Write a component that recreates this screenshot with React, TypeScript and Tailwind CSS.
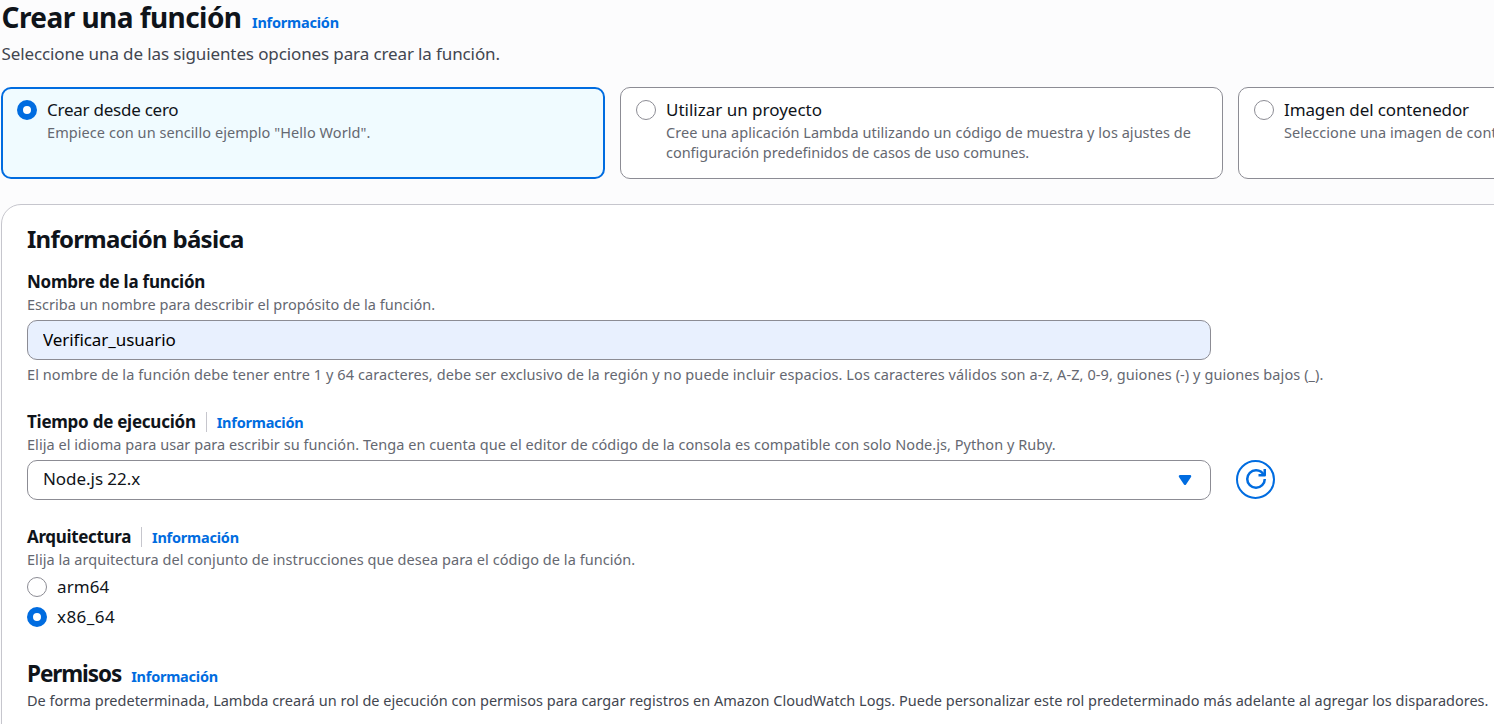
import type { ReactNode } from "react";
import { clsx } from "clsx";

function InfoLink() {
  return (
    <a href="#" className="text-[14.5px] leading-5 font-bold tracking-[-0.23px] text-[#006ce0]">
      Información
    </a>
  );
}

function Radio({ checked = false }: { checked?: boolean }) {
  return (
    <span
      className={clsx(
        "block size-5 shrink-0 rounded-full bg-white",
        checked ? "border-[6px] border-[#006ce0]" : "border-[1.5px] border-[#8c8c94]",
      )}
    />
  );
}

function Hint({ children, className }: { children: ReactNode; className?: string }) {
  return (
    <p className={clsx("text-[14.5px] leading-5 whitespace-nowrap text-[#656871]", className)}>{children}</p>
  );
}

function Tile({
  title,
  titleClass,
  checked = false,
  className,
  children,
}: {
  title: string;
  titleClass: string;
  checked?: boolean;
  className: string;
  children: ReactNode;
}) {
  return (
    <div
      className={clsx(
        "flex h-[92px] shrink-0 gap-2.5 rounded-[10px]",
        checked
          ? "border-2 border-[#006ce0] bg-[#f0fbff] pt-[8px] pl-[14px]"
          : "border border-[#8c8c94] bg-white pt-[9px] pl-[15px]",
        className,
      )}
    >
      <div className="pt-[3px]">
        <Radio checked={checked} />
      </div>
      <div>
        <div className={clsx("h-[25px] text-[17px] leading-[25px] whitespace-nowrap", titleClass)}>{title}</div>
        {children}
      </div>
    </div>
  );
}

function Label({ children, className, info = false }: { children: ReactNode; className: string; info?: boolean }) {
  return (
    <div className="flex h-[25px] items-center whitespace-nowrap">
      <span className={clsx("text-[17px] leading-[25px] font-bold", className)}>{children}</span>
      {info && (
        <span className="ml-2.5 flex h-5 items-center border-l border-[#c6c6cd] pt-px pl-2.5">
          <InfoLink />
        </span>
      )}
    </div>
  );
}

function RefreshIcon() {
  return (
    <svg viewBox="0 0 16 16" className="size-5" fill="none" stroke="currentColor" strokeWidth="2">
      <path d="M10 5h5V0" strokeLinejoin="round" />
      <path d="M15 8a6.957 6.957 0 0 1-7 7 6.957 6.957 0 0 1-7-7 6.957 6.957 0 0 1 7-7 6.87 6.87 0 0 1 6.3 4" />
    </svg>
  );
}

export default function App() {
  return (
    <main className="h-[724px] w-full overflow-hidden bg-[#fcfcfd] font-['Noto_Sans',sans-serif] text-[#0f141a]">
      <header className="pl-[1.5px]">
        <div className="flex h-[41px] items-baseline gap-[10.5px] whitespace-nowrap">
          <h1 className="text-[28px] leading-[35px] font-bold tracking-[-0.554px]">Crear una función</h1>
          <InfoLink />
        </div>
        <p className="text-[17px] leading-[25px] tracking-[-0.118px] whitespace-nowrap text-[#424650]">
          Seleccione una de las siguientes opciones para crear la función.
        </p>
      </header>

      <div className="mt-[21px] flex gap-[15px] pl-px">
        <Tile title="Crear desde cero" titleClass="tracking-[-0.25px]" checked className="w-[604px]">
          <Hint className="tracking-[0.065px]">Empiece con un sencillo ejemplo "Hello World".</Hint>
        </Tile>
        <Tile title="Utilizar un proyecto" titleClass="tracking-[0px]" className="w-[603px]">
          <Hint className="tracking-[0.03px]">
            Cree una aplicación Lambda utilizando un código de muestra y los ajustes de
          </Hint>
          <Hint className="tracking-[-0.035px]">configuración predefinidos de casos de uso comunes.</Hint>
        </Tile>
        <Tile title="Imagen del contenedor" titleClass="tracking-[-0.12px]" className="w-[603px]">
          <Hint className="tracking-[0.05px]">Seleccione una imagen de contenedor para implementar para la función.</Hint>
        </Tile>
      </div>

      <section className="mt-[25px] ml-px h-[600px] w-[1860px] rounded-[20px] border border-[#c6c6cd] bg-white pt-[19px] pl-[25px]">
        <h2 className="h-[45px] text-[24px] leading-[30px] font-bold tracking-[-0.72px]">Información básica</h2>

        <Label className="tracking-[-0.23px]">Nombre de la función</Label>
        <Hint className="tracking-[0.022px]">Escriba un nombre para describir el propósito de la función.</Hint>
        <input
          defaultValue="Verificar_usuario"
          className="mt-[6px] block h-10 w-[1184px] rounded-[10px] border border-[#8c8c94] bg-[#e8f0fe] px-[15px] pb-[2px] text-[17px] tracking-[-0.06px] text-black outline-none"
        />
        <Hint className="mt-[4px] tracking-[0.083px]">
          El nombre de la función debe tener entre 1 y 64 caracteres, debe ser exclusivo de la región y no puede incluir
          espacios. Los caracteres válidos son a-z, A-Z, 0-9, guiones (-) y guiones bajos (_).
        </Hint>

        <div className="mt-[25px]">
          <Label className="tracking-[-0.25px]" info>
            Tiempo de ejecución
          </Label>
          <Hint className="tracking-[0.046px]">
            Elija el idioma para usar para escribir su función. Tenga en cuenta que el editor de código de la consola es
            compatible con solo Node.js, Python y Ruby.
          </Hint>
          <div className="mt-[6px] flex gap-[25px]">
            <button className="flex h-10 w-[1184px] items-center justify-between rounded-[10px] border border-[#8c8c94] bg-white pr-[15px] pb-px pl-[15px] text-[17px] tracking-[-0.05px]">
              <span className="pb-[2px]">Node.js 22.x</span>
              <svg
                viewBox="0 0 16 16"
                className="mt-px size-5 text-[#006ce0]"
                fill="currentColor"
                stroke="currentColor"
                strokeWidth="2"
                strokeLinejoin="round"
              >
                <path d="M4 5h8l-4 6-4-6z" />
              </svg>
            </button>
            <button
              aria-label="Actualizar"
              className="flex size-[39px] items-center justify-center rounded-full border-2 border-[#006ce0] bg-white pb-px text-[#006ce0]"
            >
              <RefreshIcon />
            </button>
          </div>
        </div>

        <div className="mt-6">
          <Label className="tracking-[-0.339px]" info>
            Arquitectura
          </Label>
          <Hint className="tracking-[0.046px]">
            Elija la arquitectura del conjunto de instrucciones que desea para el código de la función.
          </Hint>
          <div className="mt-[8px] flex flex-col gap-[10px]">
            <div className="flex h-5 items-center gap-2.5">
              <Radio />
              <span className="text-[17px] leading-5 tracking-[0.1px]">arm64</span>
            </div>
            <div className="flex h-5 items-center gap-2.5">
              <Radio checked />
              <span className="text-[17px] leading-5 tracking-[0.45px]">x86_64</span>
            </div>
          </div>
        </div>

        <div className="mt-[32px] flex h-[31px] items-baseline gap-[10px]">
          <h2 className="text-[22.5px] leading-[30px] font-bold tracking-[-1.08px]">Permisos</h2>
          <InfoLink />
        </div>
        <p className="text-[14.5px] leading-5 whitespace-nowrap text-[#424650]">
          De forma predeterminada, Lambda creará un rol de ejecución con permisos para cargar registros en Amazon
          CloudWatch Logs. Puede personalizar este rol predeterminado más adelante al agregar los disparadores.
        </p>
      </section>
    </main>
  );
}
